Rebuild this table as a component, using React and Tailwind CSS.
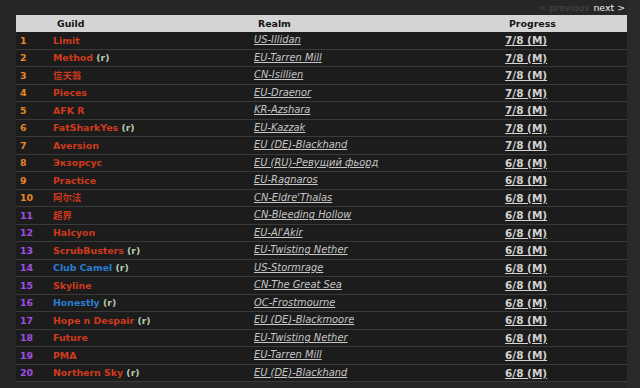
const RANK_ORANGE = "text-[#e8862a]";
const RANK_PURPLE = "text-[#a04fe0]";

const rows = [
  { n: 1, g: "Limit", r: "US-Illidan", p: "7/8 (M)", c: "red" },
  { n: 2, g: "Method", re: true, r: "EU-Tarren Mill", p: "7/8 (M)", c: "red" },
  { n: 3, g: "信天翁", r: "CN-Isillien", p: "7/8 (M)", c: "red" },
  { n: 4, g: "Pieces", r: "EU-Draenor", p: "7/8 (M)", c: "red" },
  { n: 5, g: "AFK R", r: "KR-Azshara", p: "7/8 (M)", c: "red" },
  { n: 6, g: "FatSharkYes", re: true, r: "EU-Kazzak", p: "7/8 (M)", c: "red" },
  { n: 7, g: "Aversion", r: "EU (DE)-Blackhand", p: "7/8 (M)", c: "red" },
  { n: 8, g: "Экзорсус", r: "EU (RU)-Ревущий фьорд", p: "6/8 (M)", c: "red" },
  { n: 9, g: "Practice", r: "EU-Ragnaros", p: "6/8 (M)", c: "red" },
  { n: 10, g: "阿尔法", r: "CN-Eldre'Thalas", p: "6/8 (M)", c: "red" },
  { n: 11, g: "超界", r: "CN-Bleeding Hollow", p: "6/8 (M)", c: "red" },
  { n: 12, g: "Halcyon", r: "EU-Al'Akir", p: "6/8 (M)", c: "red" },
  { n: 13, g: "ScrubBusters", re: true, r: "EU-Twisting Nether", p: "6/8 (M)", c: "red" },
  { n: 14, g: "Club Camel", re: true, r: "US-Stormrage", p: "6/8 (M)", c: "blue" },
  { n: 15, g: "Skyline", r: "CN-The Great Sea", p: "6/8 (M)", c: "red" },
  { n: 16, g: "Honestly", re: true, r: "OC-Frostmourne", p: "6/8 (M)", c: "blue" },
  { n: 17, g: "Hope n Despair", re: true, r: "EU (DE)-Blackmoore", p: "6/8 (M)", c: "red" },
  { n: 18, g: "Future", r: "EU-Twisting Nether", p: "6/8 (M)", c: "red" },
  { n: 19, g: "PMA", r: "EU-Tarren Mill", p: "6/8 (M)", c: "red" },
  { n: 20, g: "Northern Sky", re: true, r: "EU (DE)-Blackhand", p: "6/8 (M)", c: "red" },
];

const FONT = { fontFamily: '"DejaVu Sans", Verdana, "Noto Sans CJK SC", sans-serif' };

export default function App() {
  return (
    <div className="w-[640px] h-[388px] bg-[#262626] overflow-hidden" style={FONT}>
      <div className="flex h-full">
        <div className="w-[627px] pl-[16px] flex flex-col">
          <div className="h-[15px] flex justify-end items-center text-[9.4px] leading-none pr-[2px] pt-[1px]">
            <span className="text-[#4a4a4a]">&lt; previous</span>
            <span className="text-[#eeeeee] ml-[4px]">next &gt;</span>
          </div>
          <div className="h-[17px] bg-[#d4d4d4] grid grid-cols-[37px_201px_251px_1fr] items-center text-[9.4px] font-bold text-[#151515] leading-none">
            <div></div>
            <div className="pl-[4px]">Guild</div>
            <div className="pl-[4px]">Realm</div>
            <div className="pl-[4px]">Progress</div>
          </div>
          {rows.map((row) => (
            <div
              key={row.n}
              className="h-[17.5px] bg-[#1c1c1c] border-b border-[#3a3a3a] grid grid-cols-[37px_201px_251px_1fr] items-center leading-none"
            >
              <div
                className={
                  "pl-[4px] text-[9.4px] font-bold " +
                  (row.n <= 10 ? RANK_ORANGE : RANK_PURPLE)
                }
              >
                {row.n}
              </div>
              <div className="text-[9.4px] font-bold whitespace-nowrap">
                <span className={row.c === "blue" ? "text-[#2a7dd0]" : "text-[#cf3a1c]"}>{row.g}</span>
                {row.re && <span className="text-[#b4c8ae]"> (r)</span>}
              </div>
              <div className="text-[9.9px] italic underline text-[#c6c6c6] whitespace-nowrap">{row.r}</div>
              <div className="text-[10.5px] font-bold underline text-[#d2d2d2] whitespace-nowrap">{row.p}</div>
            </div>
          ))}
        </div>
        <div className="flex-1 bg-[#2a2a2a]"></div>
      </div>
    </div>
  );
}
